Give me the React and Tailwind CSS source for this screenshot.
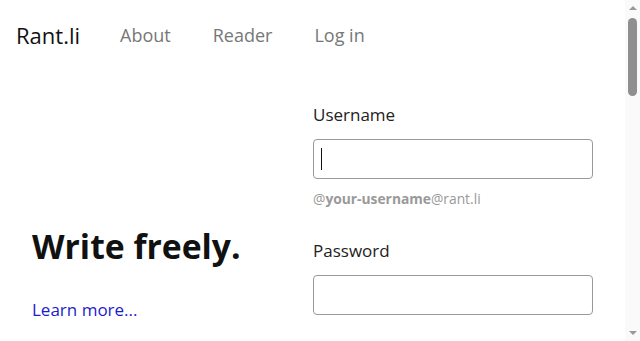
import React from 'react'

function Field({ label, type = 'text', caret = false, hint }) {
  return (
    <div>
      <label className="block text-[17px] leading-6 text-[#222]">{label}</label>
      <div className="relative mt-3">
        <input
          type={type}
          className="block w-[280px] h-10 px-2 border border-[#999] rounded-[4px] bg-white outline-none"
        />
        {caret && <span className="absolute left-[8px] top-[9px] w-px h-[22px] bg-[#111]" />}
      </div>
      {hint}
    </div>
  )
}

// window scrollbar as seen in the screenshot
function Scrollbar() {
  return (
    <div className="w-[15px] shrink-0 h-full bg-[#fafafa] flex flex-col items-center">
      <div className="h-[16px] flex items-center justify-center">
        <span className="w-0 h-0 border-x-[4px] border-x-transparent border-b-[4px] border-b-[#999]" />
      </div>
      <div className="w-[9px] h-[78px] mt-[2px] rounded-full bg-[#8f8f8f]" />
      <div className="flex-1" />
      <div className="h-[16px] flex items-center justify-center">
        <span className="w-0 h-0 border-x-[4px] border-x-transparent border-t-[4px] border-t-[#999]" />
      </div>
    </div>
  )
}

export default function App() {
  return (
    <div className="h-[341px] flex overflow-hidden bg-white font-['Open_Sans',sans-serif] text-[#111]">
      <div className="flex-1 min-w-0">
        <header className="flex items-center h-[70px] px-4">
          <a className="text-[22px] leading-[30px] text-[#111] mr-[40px]">Rant.li</a>
          <nav className="flex items-center gap-[42px] text-[18px] leading-[30px] text-[#777]">
            <a>About</a>
            <a>Reader</a>
            <a>Log in</a>
          </nav>
        </header>

        <main className="flex px-8 pt-[33px]">
          <div className="flex-1 pt-[123px]">
            <h1 className="text-[33.7px] leading-[41px] font-bold text-[#111]">Write freely.</h1>
            <a className="block mt-[31px] text-[17px] leading-6 text-[#1c1ccc]">Learn more...</a>
          </div>

          <form className="w-[280px] flex flex-col">
            <Field
              label="Username"
              caret
              hint={
                <p className="mt-[10px] text-[13.8px] leading-5 text-[#999]">
                  @<span className="font-bold">your-username</span>@rant.li
                </p>
              }
            />
            <div className="mt-[30px]">
              <Field label="Password" type="password" />
            </div>
          </form>
        </main>
      </div>
      <Scrollbar />
    </div>
  )
}
